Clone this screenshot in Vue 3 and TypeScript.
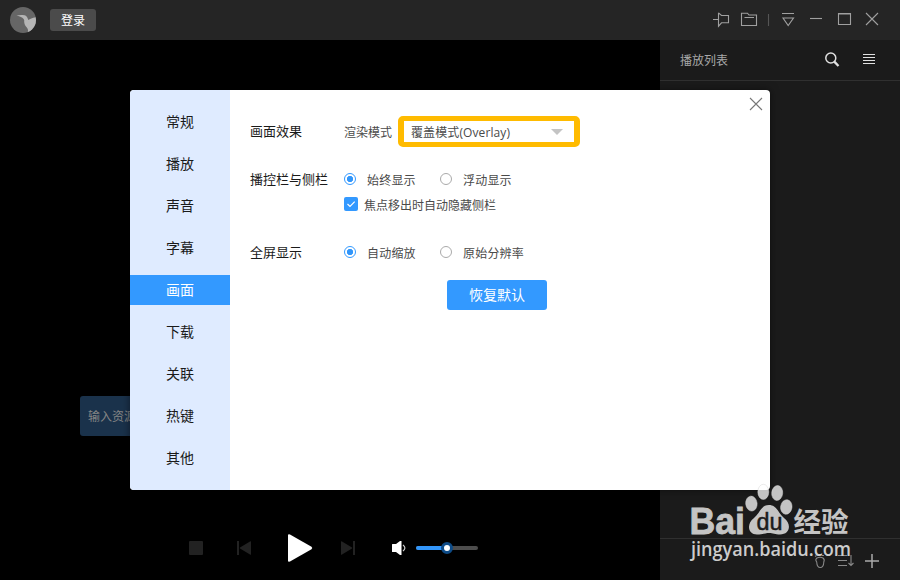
<script setup lang="ts">
import { ref } from 'vue'

interface RadioRow {
  title: string
  options: string[]
}

const tabs: string[] = ['常规', '播放', '声音', '字幕', '画面', '下载', '关联', '热键', '其他']
const activeTab = ref('画面')
const sidebarMode = ref('始终显示')
const autoHide = ref(true)
const screenMode = ref('自动缩放')
const sidebarRow: RadioRow = { title: '播控栏与侧栏', options: ['始终显示', '浮动显示'] }
const screenRow: RadioRow = { title: '全屏显示', options: ['自动缩放', '原始分辨率'] }
const volume = ref(50)
</script>

<template>
  <div class="player">
    <header class="titlebar">
      <svg class="avatar" width="26" height="26" viewBox="0 0 26 26">
        <defs><clipPath id="avatar-clip"><circle cx="13" cy="13" r="13" /></clipPath></defs>
        <circle cx="13" cy="13" r="13" fill="#666" />
        <path clip-path="url(#avatar-clip)" fill="#b5b5b5" d="M6.500 8C9 8.400 11 8 13 8C16 8.200 17.300 9.500 18.300 13C20 12.300 22 10.500 26 10.300V22L17.500 26C18.400 23.500 18.200 22.300 16.800 20.500C14.500 18 14 16 14.200 13C13.500 10.500 10 9.800 6.500 8Z" />
      </svg>
      <button class="login">登录</button>
      <svg class="window-icons" width="168" height="16" viewBox="0 0 168 16" fill="none" stroke="#a0a0a0" stroke-width="1.1">
        <path d="M1 7.500H6M6.500 .8V14.200L9.500 10.800H16.500V3.500H9.500L6.500 .8" />
        <path d="M29.500 1.200H35.500L37 3H44.500V13.500H29.500ZM32.500 5.500H42" />
        <path d="M56.500 2V14" stroke="#555" />
        <path d="M70 1.500H82M71 6H81.500L76.200 13.500Z" />
        <path d="M98 6.500H110" />
        <path d="M126.500 1.500H138.500V12.500H126.500ZM126.500 2H138.500" />
        <path d="M154 1L166 13M166 1L154 13" />
      </svg>
    </header>

    <div class="body">
      <main class="stage">
        <div class="resource">输入资源</div>
        <div class="controls">
          <svg class="transport" width="167" height="28" viewBox="0 0 167 28" fill="#222">
            <rect x="0" y="7" width="14" height="14" rx="1" />
            <path d="M48 7H50V21H48ZM62 7.500V20.500Q62 21 61 20.500L51 14.500Q50.500 14 51 13.500L61 7.500Q62 7 62 7.500Z" />
            <path fill="#fff" d="M99 1Q99 0 101 .4L122.500 12.700Q124 14 122.500 15.300L101 27.600Q99 28 99 27Z" />
            <path d="M164 7H166V21H164ZM152 7.500V20.500Q152 21 153 20.500L163 14.500Q163.500 14 163 13.500L153 7.500Q152 7 152 7.500Z" />
          </svg>
          <svg class="speaker" width="15" height="16" viewBox="0 0 15 16">
            <path fill="#fff" d="M0 4.500Q0 4 .5 4H4L8 1H9.500V15H8L4 12H.5Q0 12 0 11.500Z" />
            <path d="M11 5Q14.800 8 11 11" fill="none" stroke="#ccc" stroke-width="1.200" />
          </svg>
          <div class="slider">
            <div class="filled" :style="{ width: volume + '%' }"><i class="thumb"></i></div>
          </div>
        </div>
      </main>

      <aside class="playlist">
        <div class="list-head">
          <span>播放列表</span>
          <svg width="52" height="16" viewBox="0 0 52 16" fill="none" stroke="#e0e0e0">
            <circle cx="5.800" cy="6" r="5" stroke-width="1.500" />
            <path d="M9.300 9.600L13.500 14" stroke-width="2.300" />
            <path d="M38 2.500H50M38 5.500H50M38 8.500H50M38 11.500H50" stroke-width="1" />
          </svg>
        </div>
        <div class="list-body"></div>
        <div class="list-foot">
          <svg width="66" height="16" viewBox="0 0 66 16" fill="none" stroke="#888" stroke-width="1.100">
            <path d="M3 5Q6 3.600 9 5Q11 6.500 9.800 9Q9.600 14.500 6.200 14.500Q3 14.500 2.700 9Q.8 6.500 3 5ZM1 3.500L2.500 2.500M4 2H6M8 2.500H10" />
            <path d="M24 2.500H33M24 7.500H33M24 12.500H33M37 2V12.500M34.500 10L37 12.500L39.500 10" />
            <path d="M51 8H65M58 1V15" stroke="#aaa" stroke-width="1.500" />
          </svg>
        </div>
      </aside>
    </div>

    <section class="dialog">
      <nav class="tabs">
        <button v-for="tab in tabs" :key="tab" :class="['tab', { active: tab === activeTab }]" @click="activeTab = tab">{{ tab }}</button>
      </nav>
      <div class="settings">
        <div class="row render-row">
          <h3>画面效果</h3>
          <span class="render-label">渲染模式</span>
          <div class="select"><span>覆盖模式(Overlay)</span><i class="caret"></i></div>
        </div>
        <div class="row sidebar-row">
          <h3>{{ sidebarRow.title }}</h3>
          <label v-for="option in sidebarRow.options" :key="option" class="radio" @click="sidebarMode = option">
            <i :class="['dot', { on: option === sidebarMode }]"></i><span>{{ option }}</span>
          </label>
        </div>
        <div class="row check-row" @click="autoHide = !autoHide">
          <i class="check">
            <svg v-if="autoHide" width="14" height="14" viewBox="0 0 14 14" fill="none" stroke="#fff" stroke-width="1.200"><path d="M3.500 7L6 9.500L10.700 4.700" /></svg>
          </i><span>焦点移出时自动隐藏侧栏</span>
        </div>
        <div class="row screen-row">
          <h3>{{ screenRow.title }}</h3>
          <label v-for="option in screenRow.options" :key="option" class="radio" @click="screenMode = option">
            <i :class="['dot', { on: option === screenMode }]"></i><span>{{ option }}</span>
          </label>
        </div>
        <button class="reset">恢复默认</button>
      </div>
      <svg class="close" width="14" height="14" viewBox="0 0 14 14" fill="none" stroke="#777" stroke-width="1.100"><path d="M1 1L13 13M13 1L1 13" /></svg>
    </section>

    <svg class="watermark" width="180" height="90" viewBox="0 0 180 90">
      <g fill="#c4c4c4">
        <text class="brand" x="3.500" y="53" textLength="55.500" lengthAdjust="spacingAndGlyphs">Bai</text>
        <g fill="#fff" fill-opacity=".74" stroke="#d4d4d4" stroke-opacity=".6" stroke-width=".8">
          <ellipse cx="65.400" cy="22.600" rx="5.700" ry="7.500" transform="rotate(-6 65.4 22.6)" />
          <ellipse cx="77.300" cy="10.900" rx="5.500" ry="7.600" />
          <ellipse cx="91.200" cy="12" rx="5.500" ry="7.500" transform="rotate(6 91.2 12)" />
          <ellipse cx="100.300" cy="26" rx="5.700" ry="7.300" transform="rotate(8 100.3 26)" />
        </g>
        <path d="M83 24C75 24 74 32 68 37C60 43 62 53.500 71 53.500C77 53.500 79 52 83 52C87 52 89 53.500 94 53.500C104 53.500 106 43 98 37C92 32 91 24 83 24Z" />
        <text class="hanzi" x="107.500" y="50.500" textLength="55" lengthAdjust="spacingAndGlyphs">经验</text>
      </g>
      <text class="du" x="70.500" y="48.500" textLength="26" lengthAdjust="spacingAndGlyphs">du</text>
      <text class="url" x="5" y="75" textLength="160" lengthAdjust="spacingAndGlyphs">jingyan.baidu.com</text>
    </svg>
  </div>
</template>

<style>
body {
  background: #000;
}
</style>

<style scoped>
* {
  box-sizing: border-box;
}
.player {
  position: relative;
  display: flex;
  flex-direction: column;
  width: 900px;
  height: 580px;
  overflow: hidden;
  background: #000;
  font: 12px 'Open Sans', 'Noto Sans CJK SC', sans-serif;
}
button {
  border: 0;
  padding: 0;
  font-family: inherit;
}
.titlebar {
  display: flex;
  align-items: center;
  height: 40px;
  padding: 0 20px 0 10px;
  background: #252525;
}
.login {
  width: 46px;
  height: 22px;
  margin-left: 14px;
  padding-top: 1px;
  border-radius: 3px;
  background: #4b4b4b;
  color: #fff;
  font-size: 12px;
  line-height: 21px;
}
.window-icons {
  margin-left: auto;
}
.body {
  display: flex;
  flex: 1;
  min-height: 0;
}
.stage {
  display: flex;
  flex-direction: column;
  justify-content: space-between;
  width: 660px;
  padding: 356px 0 18px 80px;
}
.resource {
  width: 300px;
  height: 40px;
  padding: 1px 0 0 8px;
  border-radius: 3px;
  background: #1a324b;
  color: #858585;
  line-height: 40px;
}
.controls {
  display: flex;
  align-items: center;
  height: 28px;
  padding-left: 109px;
}
.speaker {
  margin-left: 36px;
}
.slider {
  width: 62px;
  height: 4px;
  margin-left: 9px;
  border-radius: 2px;
  background: #4d4d4d;
}
.filled {
  position: relative;
  height: 4px;
  border-radius: 2px;
  background: #3296fa;
}
.thumb {
  position: absolute;
  top: -4px;
  right: -6px;
  width: 12px;
  height: 12px;
  border: 3px solid #0d4b87;
  border-radius: 50%;
  background: #fff;
}
.playlist {
  display: flex;
  flex-direction: column;
  width: 240px;
  background: #1b1b1b;
}
.list-head {
  display: flex;
  align-items: center;
  justify-content: space-between;
  height: 41px;
  padding: 0 23px 0 20px;
  border-bottom: 1px solid #303030;
  color: #a8a8a8;
}
.list-body {
  flex: 1;
}
.list-foot {
  display: flex;
  align-items: center;
  justify-content: flex-end;
  height: 42px;
  padding: 3px 20px 0 0;
  border-top: 1px solid #303030;
}
.dialog {
  position: absolute;
  top: 90px;
  left: 130px;
  display: flex;
  width: 640px;
  height: 400px;
  overflow: hidden;
  border-radius: 4px;
  background: #fff;
  box-shadow: 0 0 8px rgba(0, 0, 0, 0.5);
}
.tabs {
  display: flex;
  flex-direction: column;
  gap: 12px;
  width: 100px;
  padding-top: 17px;
  background: #dfebff;
}
.tab {
  flex: none;
  height: 30px;
  background: transparent;
  color: #1a1a1a;
  font-size: 14px;
  line-height: 30px;
}
.tab.active {
  background: #3399ff;
  color: #fff;
}
.settings {
  display: flex;
  flex: 1;
  flex-direction: column;
  padding: 25px 20px;
  color: #4a4a4a;
}
.row {
  display: flex;
  align-items: center;
}
h3 {
  width: 94px;
  margin: 0;
  padding-bottom: 2px;
  color: #1a1a1a;
  font-size: 13px;
  font-weight: 400;
}
.render-row {
  height: 32px;
}
.render-label {
  width: 54px;
  padding-top: 1px;
}
.select {
  display: flex;
  align-items: center;
  justify-content: space-between;
  width: 182px;
  height: 31px;
  padding: 1px 11px 0 7px;
  border: 5px solid #ffbb00;
  border-width: 5px 6px;
  border-radius: 5px;
}
.select span {
  letter-spacing: 0.1px;
}
.caret {
  border: 6px solid transparent;
  border-top-color: #c4c4c4;
  border-bottom-width: 0;
}
.sidebar-row {
  height: 24px;
  margin-top: 20px;
}
.radio {
  display: flex;
  align-items: center;
  gap: 11px;
  width: 96px;
  white-space: nowrap;
}
.radio span {
  padding-top: 1px;
  letter-spacing: 0.2px;
}
.dot {
  flex: none;
  width: 12px;
  height: 12px;
  border: 1px solid #aaa;
  border-radius: 50%;
}
.dot.on {
  border-color: #3399ff;
  background: radial-gradient(circle, #3296fa 2.8px, #fff 3.5px);
}
.check-row {
  height: 24px;
  margin-top: 1px;
  padding-left: 94px;
}
.check-row span {
  padding-top: 1px;
}
.check {
  width: 14px;
  height: 14px;
  margin-right: 6px;
  border-radius: 2px;
  background: #3399ff;
}
.check svg {
  display: block;
}
.screen-row {
  height: 24px;
  margin-top: 24px;
}
.reset {
  width: 100px;
  height: 30px;
  margin: 16px 0 0 197px;
  border-radius: 3px;
  background: #3399ff;
  color: #fff;
  font-size: 14px;
  line-height: 30px;
}
.close {
  position: absolute;
  top: 7px;
  right: 7px;
}
.watermark {
  position: absolute;
  top: 481px;
  left: 686px;
}
.brand {
  font: bold 37px 'Liberation Sans', sans-serif;
  stroke: #c4c4c4;
  stroke-width: 0.8px;
}
.du {
  font: 23px 'Liberation Sans', sans-serif;
  fill: #1b1b1b;
  stroke: #1b1b1b;
  stroke-width: 0.5px;
}
.hanzi {
  font: bold 27px 'Noto Sans CJK SC', sans-serif;
}
.url {
  font: 600 19px 'Open Sans', sans-serif;
  fill: #ccc;
}
</style>
